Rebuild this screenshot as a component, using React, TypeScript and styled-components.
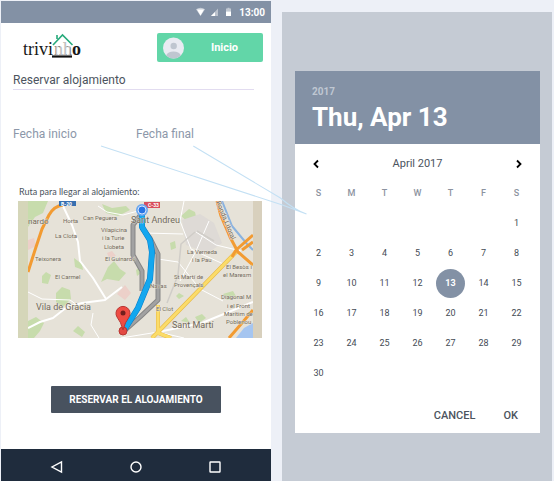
import React, { useState } from "react";
import styled, { createGlobalStyle } from "styled-components";

const GlobalStyle = createGlobalStyle`
  * { box-sizing: border-box; }
  body {
    margin: 0;
    background: #edf0f7;
    font-family: Roboto, "Liberation Sans", sans-serif;
    color: #4c545e;
  }
  button, input { font: inherit; color: inherit; border: 0; padding: 0; margin: 0; background: none; }
  button { cursor: pointer; }
  svg { display: block; }
`;

const Board = styled.main`
  position: relative;
  display: grid;
  grid-template-columns: 1fr 1fr;
  gap: 11px;
  min-height: 100vh;
  padding: 1px 2px 0 1px;
`;

const Phone = styled.section`
  display: flex;
  flex-direction: column;
  background: #fff;
`;

const StatusBar = styled.div`
  display: flex;
  align-items: center;
  justify-content: flex-end;
  gap: 7px;
  height: 22px;
  padding-right: 6px;
  background: #8391a5;
  color: #fff;
  font-size: 10px;
  font-weight: 700;
`;

const AppBar = styled.header`
  display: flex;
  align-items: center;
  justify-content: space-between;
  height: 49px;
  padding: 0 8px 0 20px;
`;

const HomeButton = styled.button`
  display: flex;
  align-items: center;
  width: 106px;
  height: 29px;
  padding: 0 6px;
  border-radius: 2px;
  background: #62d6a8;
  color: #fff;
  font-size: 11px;
  font-weight: 700;
`;

const HomeLabel = styled.span`
  flex: 1;
  padding-left: 8px;
`;

const Title = styled.h1`
  margin: 0 17px 0 12px;
  height: 18px;
  border-bottom: 1px solid #e2dcf0;
  font-size: 12px;
  font-weight: 400;
  line-height: 16px;
`;

const Dates = styled.div`
  display: grid;
  grid-template-columns: 1fr 1fr;
  padding: 34px 0 0 12px;
  margin-right: 12px;
`;

const DateField = styled.input`
  width: 100%;
  height: 20px;
  font-size: 12px;
  outline: none;
  &::placeholder { color: #8c97a9; opacity: 1; }
`;

const Route = styled.figure`
  margin: 40px 9px 0 17px;
`;

const RouteCaption = styled.figcaption`
  padding-left: 1px;
  height: 17px;
  font-family: Lato, sans-serif;
  font-size: 9px;
  line-height: 15px;
`;

const MapDrawing = styled.svg`
  width: 100%;
  height: auto;
  font-family: Roboto, sans-serif;
`;

const ReserveButton = styled.button`
  align-self: center;
  width: 170px;
  height: 27px;
  margin: 48px 0 36px;
  border-radius: 1px;
  background: #48525f;
  color: #fff;
  font-size: 10px;
  font-weight: 700;
`;

const NavBar = styled.nav`
  display: flex;
  align-items: center;
  justify-content: space-around;
  height: 32px;
  margin-top: auto;
  padding: 4px 17px 0;
  background: #1f2c3d;
  color: #fff;
`;

const Backdrop = styled.section`
  margin-top: 11px;
  padding: 59px 12px 48px 13px;
  background: #c5cbd4;
`;

const Picker = styled.div`
  background: #fff;
`;

const PickerHeader = styled.header`
  height: 73px;
  padding: 14px 17px 0;
  background: #8391a5;
  color: #fff;
`;

const Year = styled.div`
  font-size: 10px;
  font-weight: 700;
  line-height: 13px;
  color: #bfc7d2;
`;

const Chosen = styled.h2`
  margin: 0;
  font-size: 26px;
  font-weight: 700;
  line-height: 38px;
`;

const MonthBar = styled.div`
  display: flex;
  align-items: center;
  justify-content: space-between;
  padding: 5px 13px 0;
  height: 34px;
  font-size: 11px;
`;

const Arrow = styled.button`
  display: grid;
  place-items: center;
  width: 16px;
  height: 20px;
  color: #000;
`;

const Days = styled.table`
  width: calc(100% - 14px);
  margin: 0 7px;
  border-collapse: collapse;
  table-layout: fixed;
  font-size: 9px;
  text-align: center;
  th, td { height: 30px; padding: 0; }
  th { font-weight: 500; color: #8c93a0; }
`;

const Day = styled.button<{ $selected: boolean }>`
  width: 29px;
  height: 29px;
  border-radius: 50%;
  font-weight: ${(p) => (p.$selected ? 700 : 400)};
  background: ${(p) => (p.$selected ? "#8391a5" : "transparent")};
  color: ${(p) => (p.$selected ? "#fff" : "#444b55")};
`;

const Actions = styled.div`
  display: flex;
  justify-content: flex-end;
  gap: 28px;
  padding: 17px 22px 8px;
`;

const Action = styled.button`
  height: 20px;
  font-size: 11px;
  font-weight: 500;
`;

const Connectors = styled.svg`
  position: absolute;
  top: 145px;
  left: 18%;
  width: 38%;
  height: 72px;
  pointer-events: none;
`;

const StatusIcons = () => (
  <svg width="36" height="10" viewBox="0 0 36 10" fill="#fff" aria-hidden="true">
    <path d="M0 2.2Q4.5-.8 9 2.2L4.5 9Z" opacity=".55" />
    <path d="M1 2.6H8L4.5 8.5Z" />
    <path d="M15 9 22 1.5V9Z" opacity=".45" />
    <path d="M15 9 19 5V9Z" />
    <path d="M30 1.5h1.5V.8h2v.7H35V5h-5z" opacity=".5" />
    <path d="M30 4.6h5V9h-5z" />
  </svg>
);

const Logo = () => (
  <svg width="64" height="30" viewBox="0 0 64 30" role="img" aria-label="trivinho">
    <defs>
      <linearGradient id="stripe" x1="33" x2="37" y1="0" y2="0" gradientUnits="userSpaceOnUse" spreadMethod="repeat">
        <stop offset="0" stopColor="#8a8a8a" />
        <stop offset=".5" stopColor="#8a8a8a" />
        <stop offset=".5" stopColor="#bbb" />
        <stop offset="1" stopColor="#bbb" />
      </linearGradient>
    </defs>
    <g fontFamily="Liberation Serif, serif" fontSize="18">
      <text x="2" y="22" fill="#181818">trivi</text>
      <text x="33" y="22" fill="url(#stripe)">nh</text>
      <text x="51" y="22" fill="#181818" fontWeight="700">o</text>
    </g>
    <path d="M31 23.5H51" stroke="#111" strokeWidth="2.2" />
    <path d="M32 12 41.5 2 51.5 12M36 6V2" fill="none" stroke="#27aa7b" strokeWidth="1.6" />
  </svg>
);

const Avatar = () => (
  <svg width="21" height="22" viewBox="0 0 21 22" aria-hidden="true">
    <clipPath id="face"><circle cx="10.5" cy="11" r="10.5" /></clipPath>
    <g clipPath="url(#face)">
      <path d="M0 0h21v22H0z" fill="#e9ebf2" />
      <circle cx="10.7" cy="9" r="3.2" fill="#bfc6d0" />
      <path d="M3 22V18.5Q5 14.5 10.5 14.5T18 18.5V22Z" fill="#bfc6d0" />
    </g>
  </svg>
);

type Place = [string, number, number, number];
const places: Place[] = [
  ["nardó", 10, 23, 8],
  ["Horta", 45, 22, 6],
  ["Can Peguera", 65, 19, 6],
  ["La Clota", 37, 37, 6],
  ["Vilapicina", 83, 31, 6],
  ["i la Turie", 84, 39, 6],
  ["Llobeta", 86, 48, 6],
  ["Teixonera", 17, 60, 6],
  ["El Guinardó", 87, 60, 6],
  ["El Carmel", 37, 78, 6],
  ["Vila de Gràcia", 18, 109, 9],
  ["Sant Andreu", 113, 22, 9],
  ["La Verneda", 169, 53, 6],
  ["i la Pau", 174, 61, 6],
  ["St Martí de", 156, 78, 6],
  ["Provençals", 156, 86, 6],
  ["Navas", 132, 87, 6],
  ["El Clot", 138, 110, 6],
  ["Sant Martí", 154, 127, 9],
  ["El Besòs i", 208, 68, 6],
  ["el Maresm", 205, 76, 6],
  ["Diagonal M", 203, 98, 6],
  ["i el Front", 209, 107, 6],
  ["Marítim de", 206, 115, 6],
  ["Poblenou", 208, 123, 6],
];

const RouteMap = () => (
  <MapDrawing viewBox="0 0 244 137" role="img" aria-label="Mapa de la ruta">
    <clipPath id="tile"><path d="M10 0H235V137H10Z" /></clipPath>
    <path d="M0 0H244V137H0Z" fill="#d8d0bd" />
    <path d="M0 0H10V137H0Z" fill="#d5d6b9" />
    <g clipPath="url(#tile)" fill="none" strokeLinejoin="round">
      <path d="M10 0H235V137H10Z" fill="#e6e2d8" />
      <g fill="#c7dcac">
        <path d="M10 0h20l-5 12-8 4-7 10zM84 3l10 4 14-2 4 4-12 6-12-3zM90 66l6-6 6 8 6 4-7 8-12-2-6 3zM10 120l8-4 8 6-4 8-6 7h-6zM38 92l6-6 8 3 1 9-8 8-7-5zM24 75l4-4 5 3-3 9-6-1zM56 57l8 6 1 6-8-3zM55 130l5-5 7 6-3 5zM152 42l5-2 1 7-5 2zM177 116l7-3 4 4-7 5zM205 93l10-3 4 7-10 2zM163 120l5-4 4 6z" />
        <path d="M163 15l8-7 6 3 2 9-9 1zM118 69l4-3 1 6-4 3zM158 95l3-3 5 3-5 3z" />
      </g>
      <path d="M164 19l18-6 14 9 8 20-14 10-22-8z" fill="#dedad6" />
      <path d="M107 84l6 8-6 7-8-6zM10 39l6-2 2 8-8 4zM89 52l5-2 4 5-7 2z" fill="#ecd0c9" />
      <path d="M218 137l8-10 9-5v15z" fill="#a5c5f0" />
      <g stroke="#fff">
        <path d="M45 5 54 24 60 41 62 60 75 77 88 98M10 127 22 121 35 117 49 106 64 102 87 99 104 86" strokeWidth="2" />
        <path d="M10 91 24 98 52 99 62 106M75 112 73 124 81 137M80 5 89 11 105 14 120 10M166 0 162 20 173 48 190 56 212 66M140 58 160 61 182 88 205 100M103 137 140 131 166 137M126 32 165 33M191 20 178 50 162 80M178 31 198 44 223 50" strokeWidth="1" />
        <path d="M140 131 184 122 235 101" strokeWidth="2" />
      </g>
      <path d="M177 31 163 43 160 74 149 102M179 30 196 40" stroke="#d0cdc8" strokeWidth="1.5" />
      <path d="M204 0 214 25 229 43 235 49" stroke="#8ab3df" strokeWidth="2" />
      <path d="M219 50 182 88 140 131 134 137M140 104V132L153 137" stroke="#e6b744" strokeWidth="4" />
      <path d="M219 50 182 88 140 131 134 137M140 104V132L153 137" stroke="#fbdc69" strokeWidth="3" />
      <path d="M45 4Q36 5 31 14L24 28 18 46 10 71" stroke="#f29b32" strokeWidth="3" />
      <path d="M199 0 203 15 212 36 220 51 235 64M235 34 218 49 214 56M235 41 224 49M211 137 224 122 235 109" stroke="#f29b32" strokeWidth="3" />
      <path d="M124 12 115 24V54L124 70V90M124 27 132 37 140 53V99L122 116 105 131" stroke="#858585" strokeWidth="5" />
      <path d="M124 12 115 24V54L124 70V90M124 27 132 37 140 53V99L122 116 105 131" stroke="#a2a2a2" strokeWidth="3" />
      <path d="M124 12V26L132 39 134 51 132 78 120 107 105 131" stroke="#087cc5" strokeWidth="6" />
      <path d="M124 12V26L132 39 134 51 132 78 120 107 105 131" stroke="#13a7ef" strokeWidth="5" />
      <path d="M126 1H142V7H126Z" fill="#d84e5c" />
      <path d="M41 0H58V5H41Z" fill="#376fb0" />
      <text x="43" y="5" fontSize="5" fontWeight="700" fill="#fff">B-20</text>
      <text x="130" y="6" fontSize="5" fontWeight="700" fill="#fff">C-33</text>
      <g fill="#70685b" stroke="#efebe0" strokeWidth=".6" paintOrder="stroke">
        {places.map(([name, x, y, size]) => (
          <text key={name} x={x} y={y} fontSize={size}>{name}</text>
        ))}
        <text transform="translate(198 1) rotate(68)" fontSize="7">Ronda Litoral</text>
      </g>
    </g>
    <circle cx="124" cy="9" r="6" fill="#6aa7ef" />
    <circle cx="124" cy="9" r="4" fill="#2875e5" stroke="#d7e5fb" />
    <circle cx="105" cy="130" r="4" fill="#e34a43" stroke="#b93632" />
    <path d="M105 129Q103 121 99 116A7 7 0 1 1 111 116Q107 121 105 129Z" fill="#ee4c43" stroke="#b93632" />
    <circle cx="105" cy="112" r="2.5" fill="#731f1e" />
  </MapDrawing>
);

const Chevron = ({ d }: { d: string }) => (
  <svg width="8" height="10" viewBox="0 0 8 10" fill="none" stroke="currentColor" strokeWidth="1.8" aria-hidden="true">
    <path d={d} />
  </svg>
);

const NavIcon = ({ children }: { children: React.ReactNode }) => (
  <svg width="14" height="14" viewBox="0 0 14 14" fill="none" stroke="currentColor" strokeWidth="1.4" aria-hidden="true">
    {children}
  </svg>
);

const weekdays = ["S", "M", "T", "W", "T", "F", "S"];
const weeks = Array.from({ length: 6 }, (_, w) =>
  Array.from({ length: 7 }, (_, d) => w * 7 + d - 5)
);

export default function App() {
  const [selected, setSelected] = useState(13);
  const chosenDay = weekdayName(selected);

  return (
    <>
      <GlobalStyle />
      <Board>
        <Phone>
          <StatusBar>
            <StatusIcons />
            <span>13:00</span>
          </StatusBar>
          <AppBar>
            <Logo />
            <HomeButton type="button">
              <Avatar />
              <HomeLabel>Inicio</HomeLabel>
            </HomeButton>
          </AppBar>
          <Title>Reservar alojamiento</Title>
          <Dates>
            <DateField type="text" aria-label="Fecha inicio" placeholder="Fecha inicio" />
            <DateField type="text" aria-label="Fecha final" placeholder="Fecha final" />
          </Dates>
          <Route>
            <RouteCaption>Ruta para llegar al alojamiento:</RouteCaption>
            <RouteMap />
          </Route>
          <ReserveButton type="button">RESERVAR EL ALOJAMIENTO</ReserveButton>
          <NavBar>
            <button type="button" aria-label="Atrás">
              <NavIcon><path d="M11.5 2V12L2 7Z" /></NavIcon>
            </button>
            <button type="button" aria-label="Pantalla principal">
              <NavIcon><circle cx="7" cy="7" r="5" /></NavIcon>
            </button>
            <button type="button" aria-label="Recientes">
              <NavIcon><rect x="2" y="2" width="10" height="10" rx=".5" /></NavIcon>
            </button>
          </NavBar>
        </Phone>
        <Backdrop>
          <Picker role="dialog" aria-label="April 2017">
            <PickerHeader>
              <Year>2017</Year>
              <Chosen>{chosenDay}, Apr {selected}</Chosen>
            </PickerHeader>
            <MonthBar>
              <Arrow type="button" aria-label="Previous month"><Chevron d="M6 1.5 2.5 5 6 8.5" /></Arrow>
              <span>April 2017</span>
              <Arrow type="button" aria-label="Next month"><Chevron d="M2 1.5 5.5 5 2 8.5" /></Arrow>
            </MonthBar>
            <Days>
              <thead>
                <tr>{weekdays.map((d, i) => <th key={i} scope="col">{d}</th>)}</tr>
              </thead>
              <tbody>
                {weeks.map((week, w) => (
                  <tr key={w}>
                    {week.map((day) => (
                      <td key={day}>
                        {day > 0 && day <= 30 && (
                          <Day type="button" $selected={day === selected} onClick={() => setSelected(day)}>
                            {day}
                          </Day>
                        )}
                      </td>
                    ))}
                  </tr>
                ))}
              </tbody>
            </Days>
            <Actions>
              <Action type="button">CANCEL</Action>
              <Action type="button">OK</Action>
            </Actions>
          </Picker>
        </Backdrop>
        <Connectors viewBox="0 0 210 72" preserveAspectRatio="none" fill="none" stroke="#c3e0f4" aria-hidden="true">
          <path d="M1 1 182 60Q195 65 206 69M93 1 180 53Q194 65 206 69" />
        </Connectors>
      </Board>
    </>
  );
}

function weekdayName(day: number) {
  return ["Fri", "Sat", "Sun", "Mon", "Tue", "Wed", "Thu"][day % 7];
}
